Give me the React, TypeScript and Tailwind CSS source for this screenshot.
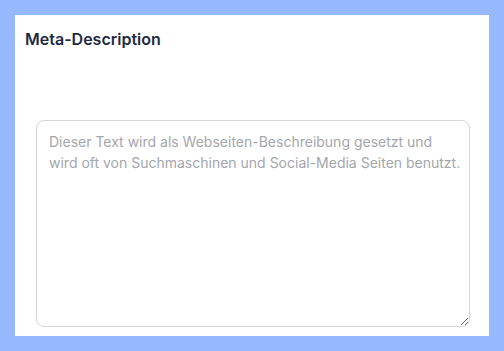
import React from 'react';

export default function App() {
    return (
        <div className="w-[504px] h-[351px] bg-[#96b8ff] p-[15px]" style={{ fontFamily: 'Inter, "Noto Sans", sans-serif' }}>
            <div className="bg-white w-full h-full flex flex-col pt-[14px] px-[10px] pb-[9px]">
                <h2 className="text-[16px] leading-[20px] font-semibold text-[#1e2a44]">Meta-Description</h2>
                <div className="flex-1 flex pt-[71px] pl-[11px] pr-[9px]">
                    <textarea
                        className="w-full h-full rounded-lg border border-[#d4d6da] bg-white pl-3 pr-[6px] py-[10px] text-[14px] leading-[21px] text-gray-700 placeholder-[#a3a6ad] outline-none"
                        placeholder={'Dieser Text wird als Webseiten-Beschreibung gesetzt und\nwird oft von Suchmaschinen und Social-Media Seiten benutzt.'}
                    />
                </div>
            </div>
        </div>
    );
}
